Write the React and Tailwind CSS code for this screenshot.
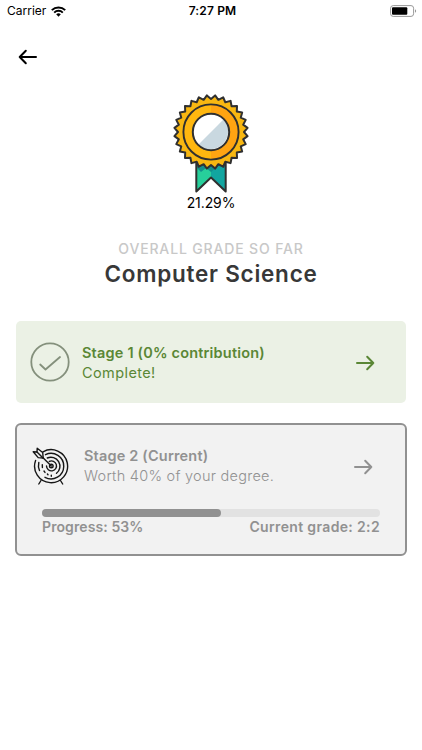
const TEETH = 28;

// zigzag outline of the medal
const medalOutline = () => {
    let points = [];
    for (let i = 0; i < TEETH * 2; i++) {
        const r = i % 2 === 0 ? 36.8 : 33;
        const a = (Math.PI * (i + 1)) / TEETH - Math.PI / 2;
        points.push((38 + r * Math.cos(a)).toFixed(2) + "," + (38 + r * Math.sin(a)).toFixed(2));
    }
    return points.join(" ");
}

function Medal() {
    return (
        <svg width="76" height="99" viewBox="0 0 76 99" fill="none">
            <path d="M23.5 62V97.5L38 83.5L52.5 97.5V62Z" fill="#12a5a0" />
            <path d="M24 97.5V70H38V83.5Z" fill="#27cf9b" />
            <path d="M24 62V74L28 78L33 74L38 78L45 72L52 74V62Z" fill="#138f8c" />
            <path d="M23.3 62V97.5L38 83.5L52.7 97.5V62" stroke="#303030" strokeWidth="2" strokeLinejoin="round" />
            <polygon points={medalOutline()} fill="#f8b711" stroke="#303030" strokeWidth="2" strokeLinejoin="round" />
            <circle cx="38" cy="38" r="27.2" fill="#ffb70f" />
            <path d="M38 10.8A27.2 27.2 0 0 1 38 65.2Z" fill="#ffa412" />
            <circle cx="38" cy="38" r="27.6" stroke="#303030" strokeWidth="1.9" />
            <circle cx="38" cy="38" r="18" fill="#fff" />
            <path d="M50.7 25.3A18 18 0 0 1 25.3 50.7Z" fill="#c9d8e0" />
            <circle cx="38" cy="38" r="18.2" stroke="#303030" strokeWidth="2" />
        </svg>
    )
}

function Arrow({ className }) {
    return (
        <svg className={className} width="20" height="16" viewBox="0 0 20 16" fill="none" stroke="currentColor" strokeWidth="2" strokeLinecap="round" strokeLinejoin="round">
            <path d="M2 8H18.3M12.2 1.8L18.3 8L12.2 14.2" />
        </svg>
    )
}

function CheckIcon() {
    return (
        <svg width="40" height="40" viewBox="0 0 40 40" fill="none" stroke="#84907c" strokeWidth="1.8" strokeLinecap="round" strokeLinejoin="round">
            <circle cx="20" cy="20" r="18.7" />
            <path d="M10.2 22.5L15.5 27.5L30 15" />
        </svg>
    )
}

function TargetIcon() {
    return (
        <svg width="38" height="40" viewBox="0 0 38 40" fill="none" stroke="#161616" strokeWidth="1.4" strokeLinecap="round" strokeLinejoin="round">
            <path d="M11 5.8A16.5 16.5 0 1 1 3.6 14.5" />
            <path d="M13.5 8.7A12.7 12.7 0 1 1 13 31.3" />
            <path d="M6.8 16.5A12.7 12.7 0 0 0 7.5 24.5" />
            <path d="M15.3 12A9 9 0 0 1 24.5 27.3" />
            <path d="M10.3 18.7L10.4 21.5M12 25L13 26.4M15.4 28L16 28.7M19.3 29.2V30.2" />
            <path d="M17.3 15.4A5 5 0 1 1 14.5 20" />
            <circle cx="19.3" cy="20" r="1.8" />
            <path d="M7 7.7L19.3 20" />
            <path d="M1.2 5.7L5 6L5.2 2.2L10.7 6.5L11.2 12L6.2 11.6Z" fill="#f2f2f2" />
            <path d="M5 6L11 12" />
            <path d="M9 34.5L6.8 38M28.5 34.5L30.7 38" />
        </svg>
    )
}

function StatusBar() {
    return (
        <div className="h-[22px] flex items-center justify-between text-black">
            <div className="w-[140px] pl-[7px] flex items-center gap-[5px]">
                <span className="text-[12px] leading-[22px]">Carrier</span>
                <svg width="15" height="11" viewBox="0 0 15 11" fill="none" stroke="#000" strokeWidth="2">
                    <path d="M.8 4.1A9.6 9.6 0 0 1 14.2 4.1" />
                    <path d="M3.2 6.6A6.2 6.2 0 0 1 11.8 6.6" />
                    <path d="M5.2 8.2A3.4 3.4 0 0 1 9.8 8.2L7.5 10.7Z" fill="#000" stroke="none" />
                </svg>
            </div>
            <span className="text-[12px] leading-[22px] font-semibold tracking-[0.15px] ml-[3px]">7:27 PM</span>
            <div className="w-[140px] pr-[5px] flex justify-end">
                <svg width="27" height="12" viewBox="0 0 27 12" fill="none">
                    <rect x="0.6" y="0.6" width="23" height="10.8" rx="2.6" stroke="#999" />
                    <rect x="2" y="2.3" width="15.3" height="7.4" rx="1" fill="#000" />
                    <path d="M25 4.2A2 2 0 0 1 25 7.8Z" fill="#999" />
                </svg>
            </div>
        </div>
    )
}

function App() {
    return (
        <div className="w-full h-[750px] bg-white overflow-hidden font-['Inter',sans-serif]">
            <StatusBar />
            <button className="block mt-[27px] ml-[18px] text-black">
                <Arrow className="rotate-180" />
            </button>

            <div className="mt-[29px] flex flex-col items-center">
                <Medal />
                <div className="text-[14px] leading-[20px] tracking-[-0.1px] text-black whitespace-nowrap">21.29%</div>
                <div className="mt-[26px] text-[14px] leading-[20px] font-medium tracking-[0.85px] text-[#c8c8c8] whitespace-nowrap">OVERALL GRADE SO FAR</div>
                <h1 className="mt-px text-[22.5px] leading-[28px] font-semibold tracking-[0.75px] text-[#383838] whitespace-nowrap">Computer Science</h1>
            </div>

            <div className="mt-[33px] mx-4 h-[82px] rounded-[5px] bg-[#ebf1e5] pl-[14px] pr-[31px] flex items-center text-[#5a8735]">
                <CheckIcon />
                <div className="ml-3 grow whitespace-nowrap">
                    <div className="text-[14.5px] leading-[21px] font-semibold tracking-[0.19px]">Stage 1 (0% contribution)</div>
                    <div className="text-[14.5px] leading-[20px] tracking-[0.4px]">Complete!</div>
                </div>
                <Arrow className="mt-px" />
            </div>

            <div className="mt-5 mx-[15px] h-[133px] rounded-[6px] border-2 border-[#919191] bg-[#f2f2f2] pt-[21px] text-[#919191] whitespace-nowrap">
                <div className="pl-[15px] pr-[32px] flex items-center">
                    <TargetIcon />
                    <div className="ml-[14px] grow">
                        <div className="text-[14.5px] leading-[21px] font-semibold tracking-[0.18px] -mt-px">Stage 2 (Current)</div>
                        <div className="text-[14.5px] leading-[20px] font-light tracking-[0.26px]">Worth 40% of your degree.</div>
                    </div>
                    <Arrow className="mt-px" />
                </div>
                <div className="mt-[23px] mx-[25px] h-2 rounded-full bg-[#e2e2e2]">
                    <div className="h-2 w-[53%] rounded-full bg-[#919191]"></div>
                </div>
                <div className="mx-[25px] flex justify-between text-[14px] leading-[20px] font-semibold">
                    <span className="tracking-[0.1px]">Progress: 53%</span>
                    <span className="tracking-[0.35px]">Current grade: 2:2</span>
                </div>
            </div>
        </div>
    )
}

export default App
